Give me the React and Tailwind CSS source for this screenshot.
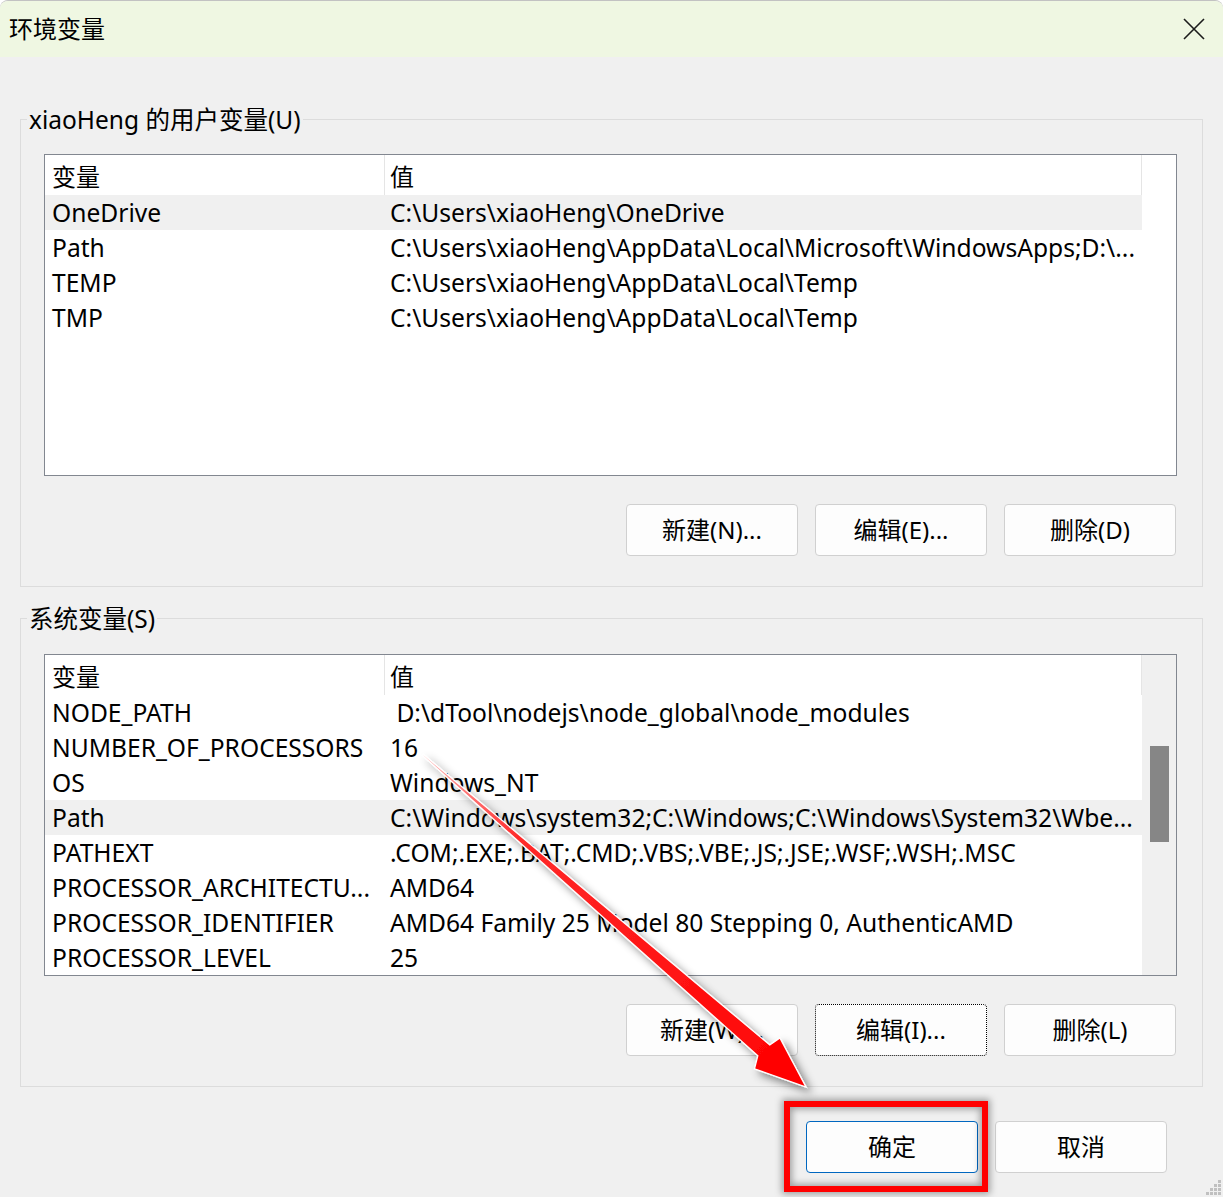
import React from "react";

const FONT = { fontFamily: '"Noto Sans", "Noto Sans CJK SC", sans-serif' };

const userVars = [
  ["OneDrive", "C:\\Users\\xiaoHeng\\OneDrive", true],
  ["Path", "C:\\Users\\xiaoHeng\\AppData\\Local\\Microsoft\\WindowsApps;D:\\...", false],
  ["TEMP", "C:\\Users\\xiaoHeng\\AppData\\Local\\Temp", false],
  ["TMP", "C:\\Users\\xiaoHeng\\AppData\\Local\\Temp", false],
];

const sysVars = [
  ["NODE_PATH", " D:\\dTool\\nodejs\\node_global\\node_modules", false],
  ["NUMBER_OF_PROCESSORS", "16", false],
  ["OS", "Windows_NT", false],
  ["Path", "C:\\Windows\\system32;C:\\Windows;C:\\Windows\\System32\\Wbe...", true],
  ["PATHEXT", ".COM;.EXE;.BAT;.CMD;.VBS;.VBE;.JS;.JSE;.WSF;.WSH;.MSC", false],
  ["PROCESSOR_ARCHITECTU...", "AMD64", false],
  ["PROCESSOR_IDENTIFIER", "AMD64 Family 25 Model 80 Stepping 0, AuthenticAMD", false],
  ["PROCESSOR_LEVEL", "25", false],
];

function ListView({ rows, scroll }) {
  return (
    <div className="h-[322px] border border-[#828790] bg-white flex">
      <div className="w-[1097px] flex flex-col">
        <div className="h-[40px] flex shrink-0">
          <div className="w-[340px] pl-[7px] flex items-center pt-[4px] border-r border-[#e5e5e5] text-[24px]">变量</div>
          <div className="flex-1 pl-[5px] flex items-center pt-[4px] border-r border-[#e5e5e5] text-[24px]">值</div>
        </div>
        {rows.map(([k, v, sel], i) => (
          <div key={i} className={"h-[35px] flex shrink-0 pt-[2px] text-[24.6px] " + (sel ? "bg-[#f0f0f0]" : "")}>
            <div className="w-[340px] pl-[7px] flex items-center whitespace-nowrap overflow-hidden">{k}</div>
            <div className="flex-1 pl-[5px] flex items-center whitespace-pre overflow-hidden">{v}</div>
          </div>
        ))}
      </div>
      {scroll ? (
        <div className="flex-1 bg-[#f0f0f0] flex justify-center pt-[91px]">
          <div className="w-[19px] h-[96px] bg-[#868686]" />
        </div>
      ) : (
        <div className="flex-1" />
      )}
    </div>
  );
}

function Btn({ children, focus, primary }) {
  let cls = "w-[172px] h-[52px] rounded-[4px] bg-[#fdfdfd] text-[24px] flex items-center justify-center ";
  if (focus) cls += "border border-dotted border-black rounded-[2px]";
  else if (primary) cls += "border border-[#0067c0]";
  else cls += "border border-[#d0d0d0]";
  return <div className={cls}>{children}</div>;
}

function Group({ label, rows, scroll, buttons, focusIdx, listTop }) {
  return (
    <fieldset className="mx-[20px] border border-[#dcdcdc] pb-[30px]">
      <legend className="ml-[6px] px-[2px] text-[24.5px] leading-[30px]">
        <span className="relative top-[1px]">{label}</span>
      </legend>
      <div className="pl-[23px] pr-[25px]">
        <div style={{ height: listTop }} />
        <ListView rows={rows} scroll={scroll} />
        <div className="flex justify-end gap-[17px] pr-[1px] mt-[28px]">
          {buttons.map((b, i) => (
            <Btn key={i} focus={i === focusIdx}>{b}</Btn>
          ))}
        </div>
      </div>
    </fieldset>
  );
}

const S = [423, 755];
const U = [0.7556, 0.655];
const N = [-0.655, 0.7556];
const P = (a, b) => [S[0] + a * U[0] + b * N[0], S[1] + a * U[1] + b * N[1]];
const arrowPts = [
  P(0, -0.7),
  P(452, -8),
  P(455, -20),
  P(507, 0),
  P(456, 20),
  P(450, 8),
  P(0, 0.7),
]
  .map((p) => p[0].toFixed(1) + "," + p[1].toFixed(1))
  .join(" ");

export default function App() {
  return (
    <div className="w-[1223px] h-[1197px] bg-white overflow-hidden text-black" style={FONT}>
      <div className="relative w-[1223px] h-[1197px] bg-[#f0f0f0] rounded-t-[8px] border-t border-[#c2c2c2] overflow-hidden">
        <div className="h-[56px] bg-[#eff7e2] flex items-center justify-between pl-[9px] pr-[18px]">
          <span className="text-[24px]">环境变量</span>
          <svg width="22" height="22" viewBox="0 0 22 22">
            <path d="M1 1 L21 21 M21 1 L1 21" stroke="#1b1b1b" strokeWidth="1.6" fill="none" />
          </svg>
        </div>
        <div className="h-[47px]" />
        <Group
          label="xiaoHeng 的用户变量(U)"
          rows={userVars}
          scroll={false}
          buttons={["新建(N)...", "编辑(E)...", "删除(D)"]}
          focusIdx={-1}
          listTop={20}
        />
        <div className="h-[16px]" />
        <Group
          label="系统变量(S)"
          rows={sysVars}
          scroll={true}
          buttons={["新建(W)...", "编辑(I)...", "删除(L)"]}
          focusIdx={1}
          listTop={21}
        />
        <div className="flex justify-end gap-[17px] pr-[56px] mt-[34px]">
          <Btn primary>确定</Btn>
          <Btn>取消</Btn>
        </div>

        {/* annotation: red highlight box */}
        <div className="absolute left-[784px] top-[1100px] w-[204px] h-[91px] border-[6px] border-[#ff0000] shadow-[0_0_7px_2px_rgba(0,0,0,0.35),inset_0_0_7px_2px_rgba(0,0,0,0.35)]" />

        {/* annotation: arrow */}
        <svg className="absolute left-0 top-[-1px] pointer-events-none" width="1223" height="1197" viewBox="0 0 1223 1197">
          <defs>
            <linearGradient id="ag" gradientUnits="userSpaceOnUse" x1="423" y1="755" x2="806" y2="1087">
              <stop offset="0" stopColor="#ffb8b8" />
              <stop offset="0.25" stopColor="#ff2a2a" />
              <stop offset="1" stopColor="#ff0000" />
            </linearGradient>
            <filter id="sh" x="-20%" y="-20%" width="140%" height="140%">
              <feDropShadow dx="5" dy="5" stdDeviation="4" floodColor="#000" floodOpacity="0.45" />
            </filter>
          </defs>
          <polygon points={arrowPts} fill="url(#ag)" stroke="#ffffff" strokeWidth="1.3" strokeLinejoin="miter" filter="url(#sh)" />
        </svg>

        {/* resize grip */}
        <svg className="absolute right-[1px] bottom-[1px]" width="16" height="16" viewBox="0 0 16 16">
          {[[12, 0], [8, 4], [12, 4], [4, 8], [8, 8], [12, 8], [0, 12], [4, 12], [8, 12], [12, 12]].map(([x, y], i) => (
            <rect key={i} x={x} y={y} width="3" height="3" fill="#c0c0c0" />
          ))}
        </svg>
      </div>
    </div>
  );
}
